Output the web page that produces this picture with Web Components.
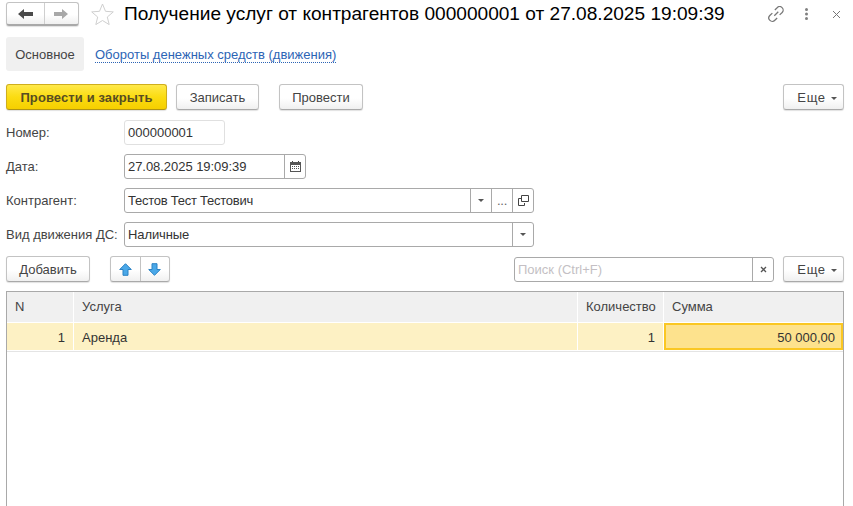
<!DOCTYPE html>
<html lang="ru">
<head>
<meta charset="utf-8">
<title>Получение услуг</title>
<style>
    html, body { margin: 0; height: 100%; background: #fff; overflow: hidden; }
    body { font: 13px "Liberation Sans", Arial, sans-serif; color: #333; }
</style>
</head>
<body>
<doc-form></doc-form>

<script>
const ARROW = `<svg width="6" height="3" viewBox="0 0 6 3"><path d="M0 0h6L3 3z" fill="#555"/></svg>`;

class UiButton extends HTMLElement {
    constructor() {
        super();
        this.attachShadow({ mode: 'open' });
        this.shadowRoot.innerHTML = `
            <style>
                :host {
                    display: inline-flex;
                    align-items: center;
                    justify-content: center;
                    box-sizing: border-box;
                    height: 26px;
                    padding-top: 1px;
                    border: 1px solid #c3c3c3;
                    border-bottom-color: #a9a9a9;
                    border-radius: 3px;
                    background: linear-gradient(#fff 0%, #fff 55%, #f0f0f0 100%);
                    box-shadow: 0 1px 1px rgba(0,0,0,.12);
                    font: 13px "Liberation Sans", Arial, sans-serif;
                    color: #444;
                    white-space: nowrap;
                }
                :host([primary]) {
                    background: linear-gradient(#ffe94a 0%, #fbdc12 50%, #f6cf00 100%);
                    border-color: #cfae1d;
                    border-bottom-color: #b29512;
                    font-weight: bold;
                    letter-spacing: .1px;
                    color: #574d22;
                }
            </style>
            <slot></slot>
        `;
    }
}

class MoreButton extends HTMLElement {
    constructor() {
        super();
        this.attachShadow({ mode: 'open' });
        this.shadowRoot.innerHTML = `
            <style>
                :host { display: block; width: 61px; }
                ui-button { width: 61px; padding-left: 7px; gap: 5px; letter-spacing: .6px; }
                svg { margin-top: 1px; }
            </style>
            <ui-button>Еще ${ARROW}</ui-button>
        `;
    }
}

class TextField extends HTMLElement {
    constructor() {
        super();
        this.attachShadow({ mode: 'open' });
        this.shadowRoot.innerHTML = `
            <style>
                :host {
                    display: flex;
                    align-items: stretch;
                    box-sizing: border-box;
                    height: 25px;
                    border: 1px solid #a9a9a9;
                    border-radius: 3px;
                    background: #fff;
                    font: 13px "Liberation Sans", Arial, sans-serif;
                    color: #333;
                }
                :host([plain]) { border-color: #e0e0e0; }
                .value {
                    flex: 1;
                    min-width: 0;
                    line-height: 24px;
                    padding-left: 3px;
                    white-space: nowrap;
                }
                ::slotted([slot=addon]) {
                    display: flex;
                    align-items: center;
                    justify-content: center;
                    width: 20px;
                    border-left: 1px solid #a9a9a9;
                    box-sizing: content-box;
                }
            </style>
            <div class="value"><slot></slot></div>
            <slot name="addon"></slot>
        `;
    }
}

class FormRow extends HTMLElement {
    constructor() {
        super();
        this.attachShadow({ mode: 'open' });
        this.shadowRoot.innerHTML = `
            <style>
                :host { display: flex; align-items: center; height: 25px; }
                .label { width: 118px; flex: none; color: #444; font-size: 13px; white-space: nowrap; }
            </style>
            <div class="label">${this.getAttribute('label')}</div>
            <slot></slot>
        `;
    }
}

class DocHeader extends HTMLElement {
    constructor() {
        super();
        this.attachShadow({ mode: 'open' });
        this.shadowRoot.innerHTML = `
            <style>
                :host { display: flex; align-items: center; height: 24px; padding: 2px 0 0 6px; }
                .nav { width: 73px; height: 24px; padding: 0; flex: none; display: flex; align-items: stretch; border-bottom-width: 2px; }
                .nav span { display: flex; align-items: center; justify-content: center; }
                .back { width: 37px; border-right: 1px solid #cfcfcf; }
                .next { flex: 1; }
                .star { margin-left: 12px; flex: none; }
                h1 {
                    margin: 0 0 0 10px;
                    font: 400 19.1px "Liberation Sans", Arial, sans-serif;
                    color: #000;
                    white-space: nowrap;
                    flex: 1;
                }
                .tools { display: flex; align-items: center; }
                .link { margin-right: 21px; }
                .dots { margin-right: 24px; }
                .close { margin-right: 12px; }
            </style>
            <ui-button class="nav">
                <span class="back"><svg width="15" height="10" viewBox="0 0 15 10"><path d="M0 5 6 0v3h9v4H6v3z" fill="#4a4a4a"/></svg></span>
                <span class="next"><svg width="15" height="10" viewBox="0 0 15 10"><path d="M14 5 8 0v3H0v4h8v3z" fill="#a8a8a8"/></svg></span>
            </ui-button>
            <svg class="star" width="23" height="22" viewBox="0 0 23 22"><path d="M11.5 1l3 7.3 7.8.6-6 5.1 1.9 7.6-6.7-4.1-6.7 4.1 1.9-7.6-6-5.1 7.8-.6z" fill="none" stroke="#cfcfcf"/></svg>
            <h1><slot></slot></h1>
            <div class="tools">
                <svg class="link" width="16" height="16" viewBox="1 1 14 14" fill="none" stroke="#777" stroke-width="1.1"><path d="M6.5 9.5 10 6M7 4.5l2-2a3 3 0 0 1 4.4 4.2l-2.2 2.1M9 11.5l-2 2a3 3 0 0 1-4.4-4.2l2.2-2.1"/></svg>
                <svg class="dots" width="3" height="12" viewBox="0 0 3 12" fill="#808080"><circle cx="1.5" cy="1.5" r="1.5"/><circle cx="1.5" cy="6" r="1.5"/><circle cx="1.5" cy="10.5" r="1.5"/></svg>
                <svg class="close" width="9" height="9" viewBox="0 0 9 9" stroke="#777"><path d="M1 1l7 7M8 1 1 8"/></svg>
            </div>
        `;
    }
}

class DocTabs extends HTMLElement {
    constructor() {
        super();
        this.attachShadow({ mode: 'open' });
        this.shadowRoot.innerHTML = `
            <style>
                :host { display: flex; align-items: center; margin: 11px 0 0 6px; font-size: 13px; }
                .active {
                    width: 78px;
                    height: 34px;
                    line-height: 36px;
                    text-align: center;
                    background: #f0f0f0;
                    border-radius: 3px;
                    color: #444;
                }
                .link {
                    margin: 2px 0 0 11px;
                    color: #2c64b5;
                    border-bottom: 1px dotted #2c64b5;
                    line-height: 14px;
                }
            </style>
            <div class="active">Основное</div>
            <div class="link">Обороты денежных средств (движения)</div>
        `;
    }
}

class DocTable extends HTMLElement {
    constructor() {
        super();
        this.attachShadow({ mode: 'open' });
        this.shadowRoot.innerHTML = `
            <style>
                :host {
                    display: block;
                    flex: 1;
                    margin: 9px 9px 0 6px;
                    border: 1px solid #a9a9a9;
                    border-bottom: 0;
                    font-size: 13px;
                    color: #444;
                }
                .grid { display: grid; grid-template-columns: 66px 503px 85px 1fr; column-gap: 1px; }
                .head > div {
                    height: 30px;
                    line-height: 30px;
                    background: #f0f0f0;
                    padding: 0 8px;
                    white-space: nowrap;
                }
                .row {
                    margin-top: 1px;
                    padding-bottom: 1px;
                    border-bottom: 1px solid #e4e4e4;
                }
                .row > div {
                    box-sizing: border-box;
                    height: 27px;
                    line-height: 29px;
                    background: #fdf1c4;
                    padding: 0 8px;
                    white-space: nowrap;
                    color: #333;
                }
                .num { text-align: right; }
                .row > .current {
                    background: #fde28d;
                    border: 2px solid #fac723;
                    line-height: 25px;
                    padding-right: 6px;
                }
            </style>
            <div class="grid head">
                <div>N</div><div>Услуга</div><div>Количество</div><div>Сумма</div>
            </div>
            <div class="grid row">
                <div class="num">1</div>
                <div>Аренда</div>
                <div class="num">1</div>
                <div class="num current">50 000,00</div>
            </div>
        `;
    }
}

class DocForm extends HTMLElement {
    constructor() {
        super();
        this.attachShadow({ mode: 'open' });
        this.shadowRoot.innerHTML = `
            <style>
                :host { display: flex; flex-direction: column; height: 506px; width: 853px; }
                .bar { display: flex; align-items: center; padding: 0 9px 0 6px; }
                .actions { margin-top: 13px; }
                .fields { display: flex; flex-direction: column; gap: 9px; padding: 10px 0 0 6px; }
                .tools { margin-top: 9px; }
                .spacer { flex: 1; }
                .arrows { width: 60px; display: flex; align-items: stretch; padding: 0; margin-left: 20px; }
                .arrows span { display: flex; align-items: center; justify-content: center; flex: 1; }
                .arrows span + span { border-left: 1px solid #c3c3c3; }
                .search { width: 260px; margin-right: 9px; }
                .addon { color: #666; }
            </style>
            <doc-header>Получение услуг от контрагентов 000000001 от 27.08.2025 19:09:39</doc-header>
            <doc-tabs></doc-tabs>
            <div class="bar actions">
                <ui-button primary style="width:161px">Провести и закрыть</ui-button>
                <ui-button style="width:83px;margin-left:9px">Записать</ui-button>
                <ui-button style="width:84px;margin-left:20px">Провести</ui-button>
                <div class="spacer"></div>
                <more-button></more-button>
            </div>
            <div class="fields">
                <form-row label="Номер:"><text-field plain style="width:101px">000000001</text-field></form-row>
                <form-row label="Дата:"><text-field style="width:182px;letter-spacing:-.05px">27.08.2025 19:09:39
                    <span slot="addon"><svg width="11" height="11" viewBox="0 0 11 11"><path d="M2 0h1v2H2zM8 0h1v2H8z" fill="#444"/><path d="M0 1h11v10H0z" fill="#555"/><path d="M1 4h9v6H1z" fill="#fff"/><path d="M2 5h1v1H2zm2 0h1v1H4zm2 0h1v1H6zm2 0h1v1H8zM2 7h1v1H2zm2 0h1v1H4zm2 0h1v1H6zm2 0h1v1H8z" fill="#555"/></svg></span>
                </text-field></form-row>
                <form-row label="Контрагент:"><text-field style="width:410px;letter-spacing:-.25px">Тестов Тест Тестович
                    <span slot="addon">${ARROW}</span>
                    <span slot="addon" class="addon">...</span>
                    <span slot="addon"><svg width="11" height="11" viewBox="0 0 11 11" fill="none" stroke="#444"><path d="M3.5.5h7v6h-7z"/><path d="M3 3.5H.5v7h6V8"/></svg></span>
                </text-field></form-row>
                <form-row label="Вид движения ДС:"><text-field style="width:410px;letter-spacing:-.1px">Наличные
                    <span slot="addon">${ARROW}</span>
                </text-field></form-row>
            </div>
            <div class="bar tools">
                <ui-button style="width:84px">Добавить</ui-button>
                <ui-button class="arrows">
                    <span><svg width="13" height="13" viewBox="0 0 13 13"><path d="M6.5.7 12.3 6.5H9v5.8H4V6.5H.7z" fill="#4aa8e8" stroke="#2b82c4"/></svg></span>
                    <span><svg width="13" height="13" viewBox="0 0 13 13"><path d="M6.5 12.3.7 6.5H4V.7h5v5.8h3.3z" fill="#4aa8e8" stroke="#2b82c4"/></svg></span>
                </ui-button>
                <div class="spacer"></div>
                <text-field class="search"><span style="color:#c4bfc4">Поиск (Ctrl+F)</span>
                    <span slot="addon"><svg width="7" height="7" viewBox="0 0 7 7" stroke="#555" stroke-width="1.3"><path d="M1 1l5 5M6 1 1 6"/></svg></span>
                </text-field>
                <more-button></more-button>
            </div>
            <doc-table></doc-table>
        `;
    }
}

customElements.define('ui-button', UiButton);
customElements.define('more-button', MoreButton);
customElements.define('text-field', TextField);
customElements.define('form-row', FormRow);
customElements.define('doc-header', DocHeader);
customElements.define('doc-tabs', DocTabs);
customElements.define('doc-table', DocTable);
customElements.define('doc-form', DocForm);
</script>
</body>
</html>
